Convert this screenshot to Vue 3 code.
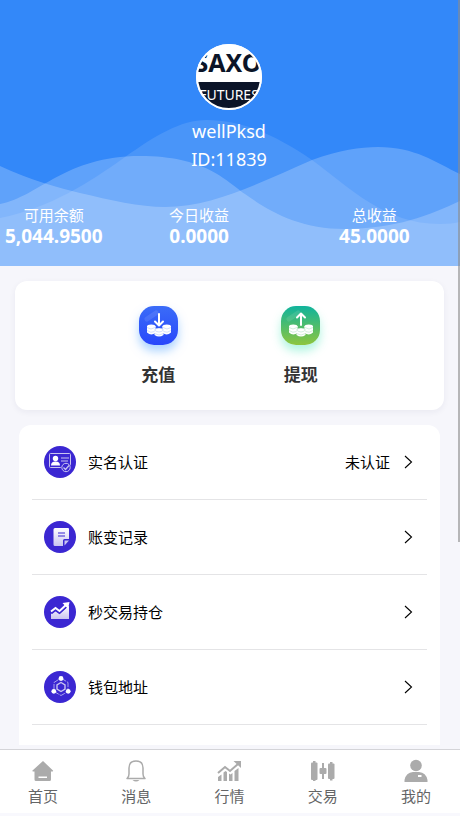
<script setup>
const stats = [
  { label: '可用余额', value: '5,044.9500' },
  { label: '今日收益', value: '0.0000' },
  { label: '总收益', value: '45.0000' },
]

const actions = [
  { id: 'deposit', label: '充值' },
  { id: 'withdraw', label: '提现' },
]

const rows = [
  { id: 'verify', label: '实名认证', note: '未认证' },
  { id: 'records', label: '账变记录' },
  { id: 'positions', label: '秒交易持仓' },
  { id: 'wallet', label: '钱包地址' },
]

const tabs = [
  { id: 'home', label: '首页' },
  { id: 'news', label: '消息' },
  { id: 'market', label: '行情' },
  { id: 'trade', label: '交易' },
  { id: 'mine', label: '我的' },
]
</script>

<template>
  <div class="page">
    <main class="content">
      <header class="hero">
        <svg class="waves" viewBox="0 0 460 146" preserveAspectRatio="none" aria-hidden="true">
          <path fill="#fff" fill-opacity=".11" d="M0 98C50 88 90 62 125 37C155 16 180 0 207 0C245 0 280 18 312 40C350 68 385 104 440 104C448 104 455 103 460 102V146H0Z" />
          <path fill="#fff" fill-opacity=".22" d="M0 84C40 76 65 36 140 36C205 36 225 60 245 74C270 92 300 109 345 109C395 109 430 95 460 81V146H0Z" />
          <path fill="#fff" fill-opacity=".22" d="M0 46C30 60 60 68 80 73C110 80 140 87 165 87C215 87 265 60 312 40C340 30 360 27 378 27C415 27 435 42 460 54V146H0Z" />
        </svg>
        <div class="profile">
          <svg class="avatar" viewBox="0 0 66 66">
            <defs>
              <clipPath id="avatar-clip"><circle cx="33" cy="33" r="32" /></clipPath>
            </defs>
            <circle cx="33" cy="33" r="33" fill="#fff" />
            <g clip-path="url(#avatar-clip)">
              <rect y="38" width="66" height="28" fill="#0b1428" />
              <text class="logo-top" x="32" y="28" text-anchor="middle">SAXO</text>
              <text class="logo-bottom" x="33" y="56" text-anchor="middle">FUTURES</text>
            </g>
            <circle cx="33" cy="33" r="32" fill="none" stroke="#fff" stroke-width="2" />
          </svg>
          <div class="name">wellPksd</div>
          <div class="name">ID:11839</div>
        </div>
        <dl class="stats">
          <div v-for="s in stats" :key="s.label" class="stat">
            <dt>{{ s.label }}</dt>
            <dd>{{ s.value }}</dd>
          </div>
        </dl>
      </header>

      <section class="actions">
        <button v-for="a in actions" :key="a.id" type="button" class="action">
          <span class="action-icon" :class="a.id">
            <svg viewBox="0 0 39 39" aria-hidden="true">
              <path d="M8 13L17 7" fill="none" stroke="#fff" stroke-opacity=".1" stroke-width="5" stroke-linecap="round" />
              <path v-if="a.id === 'deposit'" d="M20 8V19M16 15.500L20 19.500L24 15.500" class="arrow" />
              <path v-else d="M20 19V8M16 11.500L20 7.500L24 11.500" class="arrow" />
              <g fill="#fff">
                <path d="M8 20V26.500Q12 30 16.500 27V20Z" /><ellipse cx="12.250" cy="20.500" rx="4.250" ry="2" />
                <path d="M23.500 20V27Q28 30 32 26.500V20Z" /><ellipse cx="27.750" cy="20.500" rx="4.250" ry="2" />
                <path d="M15.500 24V29Q20 32 24.500 29V24Z" /><ellipse cx="20" cy="24" rx="4.500" ry="2" />
              </g>
              <path class="coin-lines" d="M8 21.500Q12 24.500 16 21.500M8 24.500Q12 27.500 15.500 25.500M24 21.500Q28 24.500 32 21.500M24.500 25.500Q28 27.500 32 24.500M15.500 24Q20 28 24.500 24M15.500 27.500Q20 30.500 24.500 27.500M15.500 24Q20 20 24.500 24" />
            </svg>
          </span>
          <span class="action-label">{{ a.label }}</span>
        </button>
      </section>

      <nav class="list">
        <a v-for="r in rows" :key="r.id" href="#" class="row">
          <svg class="row-icon" viewBox="0 0 32 32" aria-hidden="true">
            <defs>
              <linearGradient id="pale" x1="0" y1="0" x2="0" y2="1">
                <stop offset="0" stop-color="#fff" />
                <stop offset="1" stop-color="#c9c4f0" />
              </linearGradient>
            </defs>
            <circle cx="16" cy="16" r="16" fill="#3b27d2" />
            <template v-if="r.id === 'verify'">
              <rect x="5.500" y="7.500" width="21" height="14" rx="1" fill="none" stroke="#c9c4f0" />
              <circle cx="11.500" cy="12.500" r="2.700" fill="#fff" />
              <path d="M7 19.500Q7 15.500 11.500 15.500T16 19.500Z" fill="#fff" />
              <path d="M17 12H25M17 15H24" stroke="#c9c4f0" stroke-width="1.200" />
              <circle cx="22" cy="21.500" r="5.200" fill="#3b27d2" />
              <circle cx="22" cy="21.500" r="4.200" fill="none" stroke="#c9c4f0" />
              <path d="M19.500 21.500L21.500 23.500L25 19.500" fill="none" stroke="#c9c4f0" stroke-width="1.200" />
            </template>
            <template v-else-if="r.id === 'records'">
              <path d="M11 7H24Q25 7 25 8V18H20.500Q19 18 19 19.500V25H11Q9.500 25 9.500 23.500V8.500Q9.500 7 11 7Z" fill="url(#pale)" />
              <path d="M20.500 19.500H25L20.500 24.500Z" fill="#c9c4f0" />
              <path d="M14 12H21M14 15H21" stroke="#3b27d2" stroke-width="1.200" />
            </template>
            <template v-else-if="r.id === 'positions'">
              <path d="M7 18L11.500 15L15.500 18L25 9.500V23H7Z" fill="url(#pale)" />
              <path d="M7 16.500L11.500 13L15.500 16L23 9" fill="none" stroke="#3b27d2" stroke-width="3.600" />
              <path d="M7 15.500L11.500 12L15.500 15L22.500 8.500" fill="none" stroke="#fff" stroke-width="2" />
              <path d="M18.500 7L25.500 6L24 13Z" fill="#fff" />
            </template>
            <template v-else>
              <path d="M17 7L24 11.500V20.500L17 24.500L10 20.500V11.500Z" fill="none" stroke="#aaa2ec" stroke-dasharray="6 1" />
              <path d="M17 11.500L21 13.800V18.200L17 20.500L13 18.200V13.800Z" fill="none" stroke="#c9c4f0" stroke-width="1.400" />
              <circle cx="17" cy="7.500" r="2.400" fill="#fff" />
              <circle cx="9.800" cy="20.300" r="2.400" fill="#fff" />
              <circle cx="24.200" cy="20.300" r="2.400" fill="#fff" />
            </template>
          </svg>
          <span class="row-label">{{ r.label }}</span>
          <span v-if="r.note" class="row-note">{{ r.note }}</span>
          <svg class="chevron" viewBox="0 0 9 14" aria-hidden="true"><path d="M1 1L7.500 7L1 13" /></svg>
        </a>
      </nav>
    </main>

    <nav class="tabbar">
      <a v-for="t in tabs" :key="t.id" href="#" class="tab">
        <svg class="tab-icon" viewBox="0 0 24 24" aria-hidden="true">
          <path v-if="t.id === 'home'" fill-rule="evenodd" d="M12 2L22 11.500Q22.500 12.500 21.500 12.500H20V20.500Q20 22 18.500 22H5Q3.500 22 3.500 20.500V12.500H2Q1 12.500 1.500 11.500ZM7.500 17.500V19H16V17.500Z" />
          <template v-else-if="t.id === 'news'">
            <path d="M3 19.500Q5 18 5 15V9Q5 2 12 2T19 9V15Q19 18 21 19.500Z" fill="none" stroke="#ababab" stroke-width="1.500" stroke-linejoin="round" />
            <path d="M8.500 21H15.500Q12 24 8.500 21Z" />
          </template>
          <template v-else-if="t.id === 'market'">
            <path d="M1 18L4.500 15.500V22H1ZM6.500 13.500L8.500 12L10 13V22H6.500ZM12 14.500L13.500 15.500L15.500 14V22H12ZM17.500 12L21.500 9V22H17.500Z" />
            <path d="M1 14L8 8L13 12L21 5" fill="none" stroke="#ababab" stroke-width="2" />
            <path d="M16.500 2H24V9Z" />
          </template>
          <template v-else-if="t.id === 'trade'">
            <rect x="0" y="3.500" width="6.500" height="17.500" rx="1" />
            <rect x="2" y="2" width="2.500" height="20" />
            <rect x="8.500" y="9" width="7" height="6" rx="1" />
            <rect x="11" y="4" width="2" height="16" />
            <rect x="17" y="4.500" width="6.500" height="15.500" rx="1" />
            <rect x="19" y="3" width="2.500" height="18.500" />
          </template>
          <template v-else>
            <circle cx="12" cy="6.500" r="5.800" />
            <path fill-rule="evenodd" d="M.500 23V21Q2 13.500 9 13H15Q22 13.500 23.500 21V23ZM14 16V18H17.500V16Z" />
          </template>
        </svg>
        <span>{{ t.label }}</span>
      </a>
    </nav>
  </div>
</template>

<style>
body {
  margin: 0;
  background: #f6f6fb;
}
</style>

<style scoped>
.page {
  position: relative;
  display: flex;
  flex-direction: column;
  min-height: 100vh;
  box-sizing: border-box;
  padding-bottom: 4px;
  background: #f8f8fd;
  color: #000;
  font-family: "Noto Sans", "Noto Sans CJK SC", sans-serif;
  font-size: 15px;
}
.page::after {
  content: "";
  position: absolute;
  top: 0;
  right: 0;
  width: 2px;
  height: 542px;
  background: rgba(140, 140, 140, 0.6);
}
.content {
  flex: 1;
  display: flex;
  flex-direction: column;
  padding-bottom: 4px;
  background: #f6f6fb;
}
.hero {
  position: relative;
  display: flex;
  flex-direction: column;
  height: 266px;
  background: #3388f9;
  color: #fff;
}
.waves {
  position: absolute;
  left: 0;
  bottom: 0;
  width: 100%;
  height: 146px;
}
.profile {
  position: relative;
  display: flex;
  flex-direction: column;
  align-items: center;
  padding: 44px 2px 0 0;
}
.avatar {
  width: 66px;
  height: 66px;
  margin-bottom: 7px;
}
.logo-top {
  fill: #0b1428;
  font-size: 25px;
  font-weight: 700;
}
.logo-bottom {
  fill: #fff;
  font-size: 14px;
}
.name {
  font-size: 18px;
  line-height: 28px;
}
.stats {
  position: relative;
  display: grid;
  grid-template-columns: 108fr 184fr 168fr;
  margin: 32px 2px 0 0;
  text-align: center;
}
.stat dt {
  line-height: 20px;
}
.stat dd {
  margin: 0;
  font-size: 19px;
  font-weight: 700;
  line-height: 22px;
}
.actions {
  display: flex;
  margin: 15px 16px 15px 15px;
  padding: 25px 72px 21px;
  border-radius: 12px;
  background: #fff;
  box-shadow: 0 2px 6px rgba(40, 40, 90, 0.06);
}
.action {
  flex: 1;
  display: flex;
  flex-direction: column;
  align-items: center;
  gap: 16px;
  padding: 0;
  border: 0;
  background: none;
  color: #333;
  font: inherit;
}
.action-icon {
  width: 39px;
  height: 39px;
  border-radius: 15px;
}
.action-icon svg {
  display: block;
}
.deposit {
  background: linear-gradient(#3b6cf8, #2747fb);
  box-shadow: 0 6px 10px rgba(90, 170, 255, 0.5);
}
.withdraw {
  background: linear-gradient(#0fb39c, #8dc63f);
  box-shadow: 0 6px 10px rgba(60, 230, 180, 0.4);
}
.arrow {
  fill: none;
  stroke: #fff;
  stroke-width: 2;
  stroke-linecap: round;
  stroke-linejoin: round;
}
.coin-lines {
  fill: none;
  stroke: #4a78e8;
  stroke-opacity: 0.4;
  stroke-width: 0.6;
}
.withdraw .coin-lines {
  stroke: #3fb56f;
}
.action-label {
  font-size: 17px;
  font-weight: 700;
  line-height: 28px;
}
.list {
  flex: 1;
  margin: 0 20px 0 19px;
  padding: 0 13px 20px;
  border-radius: 12px 12px 0 0;
  background: #fff;
}
.row {
  display: flex;
  align-items: center;
  height: 74px;
  padding: 0 14px 0 12px;
  border-bottom: 1px solid #e4e4e6;
  color: #000;
  line-height: 20px;
  text-decoration: none;
}
.row-icon {
  width: 32px;
  height: 32px;
  margin-right: 12px;
}
.row-label {
  flex: 1;
}
.row-note {
  margin-right: 14px;
}
.chevron {
  width: 9px;
  height: 14px;
  fill: none;
  stroke: #000;
  stroke-width: 1.1;
}
.tabbar {
  display: flex;
  justify-content: space-between;
  padding: 9px 29px 5px 28px;
  border-top: 1px solid #d4d4d8;
  background: #fff;
}
.tab {
  display: flex;
  flex-direction: column;
  align-items: center;
  gap: 1px;
  color: #646566;
  line-height: 24px;
  text-decoration: none;
}
.tab-icon {
  width: 24px;
  height: 24px;
  fill: #ababab;
}
</style>
